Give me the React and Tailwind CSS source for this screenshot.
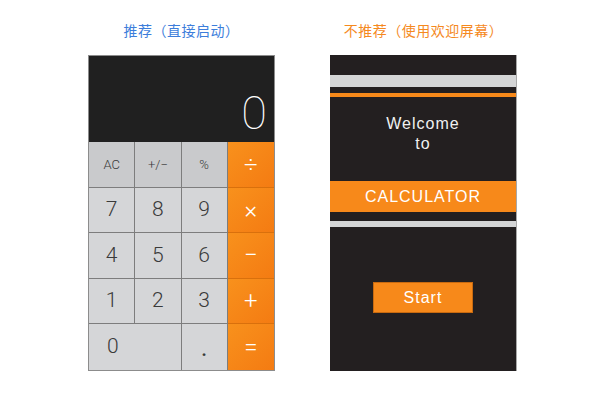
import React from 'react';

const keys = [
  { label: 'AC', kind: 'top' },
  { label: '+/−', kind: 'top' },
  { label: '%', kind: 'top' },
  { label: '÷', kind: 'op' },
  { label: '7' }, { label: '8' }, { label: '9' }, { label: '×', kind: 'op' },
  { label: '4' }, { label: '5' }, { label: '6' }, { label: '−', kind: 'op' },
  { label: '1' }, { label: '2' }, { label: '3' }, { label: '+', kind: 'op' },
  { label: '0', wide: true }, { label: '.' }, { label: '=', kind: 'op', last: true },
];

function Key({ k, row }) {
  const isOp = k.kind === 'op';
  const isTop = k.kind === 'top';
  const bottom = row < 4 ? (isOp ? 'border-b border-[#d9700c]' : 'border-b border-[#7d7d7d]') : '';
  const base = isOp
    ? 'bg-gradient-to-br from-[#f8911c] to-[#f47b12] text-white text-[24px] font-light'
    : `${isTop ? 'bg-[#c9cacc] text-[13px]' : 'bg-[#d5d6d8] text-[21px]'} text-[#3a3a3a] font-light border-r border-[#7d7d7d]`;
  return (
    <div
      className={`${base} ${bottom} flex items-center ${k.wide ? 'col-span-2 justify-start pl-[18px]' : 'justify-center'}`}
    >
      {k.label === '.' ? <span className="text-[18px] font-bold leading-none mt-[6px]">.</span> : k.label}
    </div>
  );
}

function Calculator() {
  let idx = 0;
  const rows = [];
  for (let r = 0; r < 5; r++) {
    const count = r === 4 ? 3 : 4;
    rows.push(keys.slice(idx, idx + count).map((k) => ({ k, r })));
    idx += count;
  }
  return (
    <div
      className="w-[187px] h-[316px] border border-[#8c8c8c] bg-[#202020] flex flex-col"
      style={{ fontFamily: 'Roboto, sans-serif' }}
    >
      <div className="h-[86px] flex items-end justify-end pr-[7px] pb-[6px]">
        <span className="text-white text-[47px] font-thin leading-none">0</span>
      </div>
      <div className="flex-1 grid grid-cols-4 grid-rows-5">
        {rows.flat().map(({ k, r }, i) => (
          <Key key={i} k={k} row={r} />
        ))}
      </div>
    </div>
  );
}

function Welcome() {
  return (
    <div className="w-[187px] h-[316px] bg-[#231f20] border-r border-[#a8a8a8] flex flex-col text-[#f1f1f1] tracking-[1px]">
      <div className="mt-[20px] h-[12px] bg-[#d4d5d6]" />
      <div className="mt-[6px] h-[4px] bg-[#f7891a]" />
      <div className="mt-[17px] text-center text-[16px] leading-[20px]">
        <div>Welcome</div>
        <div>to</div>
      </div>
      <div className="mt-[27px] h-[31px] bg-[#f7891a] flex items-center justify-center text-[16px] text-white">
        CALCULATOR
      </div>
      <div className="mt-[9px] h-[6px] bg-[#d4d5d6]" />
      <div className="mt-[55px] flex justify-center">
        <div className="w-[100px] h-[31px] bg-[#f7891a] border border-[#c86a10] flex items-center justify-center text-[16px] text-white">
          Start
        </div>
      </div>
    </div>
  );
}

export default function App() {
  return (
    <div
      className="w-[590px] h-[393px] bg-white flex gap-[55px] pl-[88px]"
      style={{ fontFamily: '"Liberation Sans", "Noto Sans CJK SC", sans-serif' }}
    >
      <div className="flex flex-col items-center">
        <div className="pt-[20px] h-[55px] text-[14px] leading-[20px] tracking-[0.5px] text-[#3d7edb]" style={{ fontFamily: '"Noto Sans CJK SC", sans-serif' }}>
          推荐（直接启动）
        </div>
        <Calculator />
      </div>
      <div className="flex flex-col items-center">
        <div className="pt-[20px] h-[55px] text-[14px] leading-[20px] tracking-[0.5px] text-[#f5891e]" style={{ fontFamily: '"Noto Sans CJK SC", sans-serif' }}>
          不推荐（使用欢迎屏幕）
        </div>
        <Welcome />
      </div>
    </div>
  );
}
